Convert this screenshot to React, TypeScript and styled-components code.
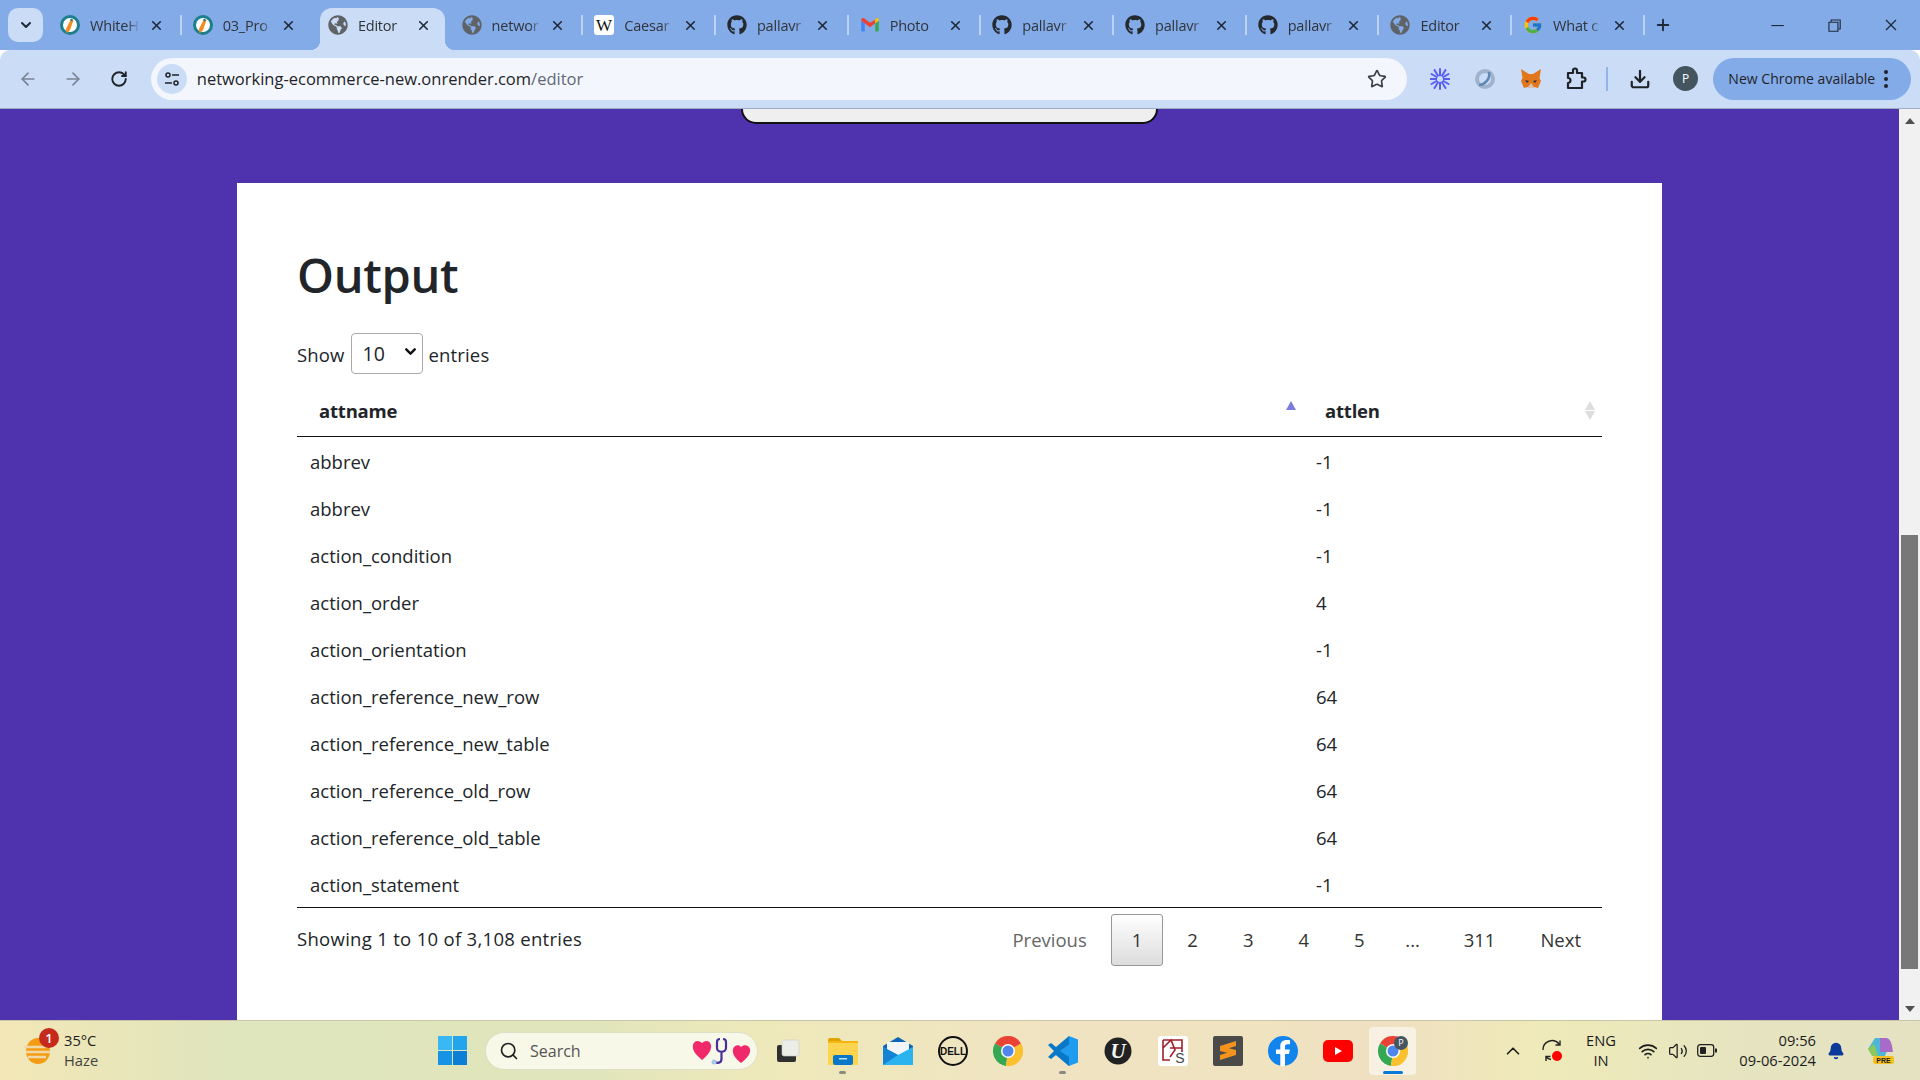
import React from 'react';
import styled, { createGlobalStyle } from 'styled-components';
import { FaGithub, FaGlobeAmericas } from 'react-icons/fa';
import { FcGoogle } from 'react-icons/fc';
import { VscClose, VscChromeMinimize, VscChromeRestore } from 'react-icons/vsc';
import { ArrowLeft, ArrowRight, RotateCw, Star, Download, ChevronDown, Plus, Search, ChevronUp, Wifi, Volume2, Bell, X } from 'lucide-react';

const UI_FONT = `"Open Sans", "Noto Sans", sans-serif`;

const GlobalStyle = createGlobalStyle`
  html, body { margin: 0; padding: 0; height: 100%; overflow: hidden; }
  body { font-family: ${UI_FONT}; color: #212529; }
  * { box-sizing: border-box; }
`;

const Screen = styled.div`
  width: 1920px;
  height: 1080px;
  display: flex;
  flex-direction: column;
  overflow: hidden;
`;

/* browser chrome */
const TabStrip = styled.div`
  height: 50px;
  flex: none;
  background: #83abe8;
  display: flex;
  padding-left: 8px;
`;
const TabMenu = styled.div`
  width: 35px;
  height: 34px;
  margin-top: 8px;
  margin-right: 5px;
  flex: none;
  border-radius: 10px;
  background: #cbdcf6;
  display: flex;
  align-items: center;
  justify-content: center;
  color: #1f2937;
`;
const Tab = styled.div<{ $active?: boolean; $sep?: boolean }>`
  position: relative;
  z-index: 1;
  width: 124.7px;
  flex: none;
  height: 42px;
  margin: 8px ${(p) => (p.$active ? '5px' : '4px')} 0 ${(p) => (p.$active ? '6.5px' : '4px')};
  padding: 0 0 8px 8px;
  display: flex;
  align-items: center;
  border-radius: 12px 12px 0 0;
  background: ${(p) => (p.$active ? '#cbdcf6' : 'transparent')};
  ${(p) =>
    p.$active
      ? `&::before, &::after {
           content: '';
           position: absolute;
           bottom: 0;
           width: 10px;
           height: 10px;
         }
         &::before {
           left: -10px;
           background: radial-gradient(circle at 0 0, transparent 10px, #cbdcf6 10.5px);
         }
         &::after {
           right: -10px;
           background: radial-gradient(circle at 100% 0, transparent 10px, #cbdcf6 10.5px);
         }`
      : p.$sep
      ? `&::after {
           content: '';
           position: absolute;
           right: -5px;
           top: 7px;
           width: 2px;
           height: 20px;
           background: #bcd2f3;
         }`
      : ''}
`;
const TabIcon = styled.div`
  width: 20px;
  height: 20px;
  flex: none;
  display: flex;
  align-items: center;
  justify-content: center;
  font-size: 20px;
`;
const TabTitle = styled.div`
  width: 52px;
  margin-left: 10px;
  font-size: 14.5px;
  letter-spacing: -0.2px;
  color: #30343a;
  white-space: nowrap;
  overflow: hidden;
  -webkit-mask-image: linear-gradient(90deg, #000 72%, transparent 96%);
  mask-image: linear-gradient(90deg, #000 72%, transparent 96%);
`;
const TabClose = styled.div`
  margin-left: 6px;
  width: 16px;
  height: 16px;
  display: flex;
  align-items: center;
  justify-content: center;
  color: #1f2937;
`;
const NewTab = styled.div`
  margin: 8px 0 0 4px;
  width: 30px;
  height: 34px;
  display: flex;
  align-items: center;
  justify-content: center;
  color: #1f2937;
`;
const WindowControls = styled.div`
  margin-left: auto;
  display: flex;
  height: 50px;
  padding-right: 1px;
`;
const WindowButton = styled.div`
  width: 57px;
  display: flex;
  align-items: center;
  justify-content: center;
  color: #1f2937;
`;
const Toolbar = styled.div`
  height: 59px;
  flex: none;
  background: #cbdcf6;
  border-radius: 10px 10px 0 0;
  border-bottom: 1px solid #9fadc4;
  display: flex;
  align-items: center;
  padding: 0 8px 1px 5px;
`;
const ToolButton = styled.div<{ $dim?: boolean }>`
  width: 45.6px;
  height: 40px;
  flex: none;
  display: flex;
  align-items: center;
  justify-content: center;
  color: ${(p) => (p.$dim ? '#7a8494' : '#1f2328')};
`;
const Omnibox = styled.div`
  width: 1256px;
  height: 42px;
  flex: none;
  margin: 0 10px 0 9px;
  border-radius: 21px;
  background: #f3f7fd;
  display: flex;
  align-items: center;
  padding: 0 20px 0 6px;
`;
const SiteChip = styled.div`
  width: 30px;
  height: 30px;
  border-radius: 50%;
  background: #cbdcf6;
  display: flex;
  align-items: center;
  justify-content: center;
`;
const Url = styled.div`
  margin-left: 10px;
  font-size: 16.5px;
  color: #1f2328;
  span { color: #5f6772; }
`;
const StarSlot = styled.div`
  margin-left: auto;
  display: flex;
  color: #3c4043;
`;
const ToolDivider = styled.div`
  width: 2px;
  height: 24px;
  background: #92b4e8;
  margin: 0 9px 0 7px;
  flex: none;
`;
const Avatar = styled.div`
  width: 25px;
  height: 25px;
  border-radius: 50%;
  background: #44555f;
  color: #fff;
  font-size: 12px;
  display: flex;
  align-items: center;
  justify-content: center;
`;
const UpdatePill = styled.div`
  margin-left: 5px;
  width: 198px;
  height: 42px;
  flex: none;
  border-radius: 21px;
  background: #83abe8;
  display: flex;
  align-items: center;
  padding-left: 15px;
  font-size: 14px;
  letter-spacing: 0.03px;
  color: #1f2328;
  white-space: nowrap;
  svg { margin-left: 9px; }
`;

/* page */
const Viewport = styled.div`
  height: 911px;
  flex: none;
  display: flex;
`;
const Page = styled.div`
  width: 1899px;
  flex: none;
  background: #4f32ae;
  overflow: hidden;
`;
const TopPill = styled.div`
  width: 417px;
  height: 15px;
  margin: 0 auto;
  background: #efefef;
  border: 2px solid #111;
  border-top: 0;
  border-radius: 0 0 22px 22px;
`;
const Card = styled.div`
  width: 1425px;
  height: 900px;
  margin: 59px auto 0;
  background: #fff;
  padding: 63px 60px 0;
`;
const Heading = styled.h1`
  margin: 0 0 29px;
  font-size: 47px;
  font-weight: 600;
  line-height: 58px;
  letter-spacing: -0.3px;
  color: #212529;
`;
const LengthRow = styled.div`
  height: 41px;
  padding-top: 2px;
  display: flex;
  align-items: center;
  gap: 6px;
  font-size: 18.5px;
  letter-spacing: 0.15px;
`;
const SelectWrap = styled.div`
  position: relative;
  width: 72px;
  height: 41px;
  margin-top: -2px;
  svg {
    position: absolute;
    right: 4px;
    top: 10px;
    pointer-events: none;
  }
`;
const LengthSelect = styled.select`
  appearance: none;
  width: 72px;
  height: 41px;
  padding: 0 0 0 11px;
  border: 1px solid #aaa;
  border-radius: 4px;
  background: #fff;
  font-family: ${UI_FONT};
  font-size: 19.5px;
  color: #212529;
`;
const Table = styled.table`
  width: 1305px;
  margin-top: 15px;
  border-collapse: collapse;
  table-layout: fixed;
  font-size: 18.5px;
  border-bottom: 1px solid #111;
`;
const HeadCell = styled.th<{ $w: number }>`
  position: relative;
  width: ${(p) => p.$w}px;
  height: 47px;
  padding: 0 0 3px 22px;
  text-align: left;
  font-weight: 700;
  letter-spacing: -0.2px;
  border-bottom: 1px solid #111;
`;
const SortArrow = styled.span<{ $dir: 'up' | 'down'; $on?: boolean }>`
  position: absolute;
  right: 7px;
  top: ${(p) => (p.$dir === 'up' ? '12px' : '22px')};
  width: 0;
  height: 0;
  border-left: 5px solid transparent;
  border-right: 5px solid transparent;
  ${(p) =>
    p.$dir === 'up'
      ? `border-bottom: 9px solid ${p.$on ? '#7c7cdc' : '#dddddd'};`
      : `border-top: 9px solid ${p.$on ? '#7c7cdc' : '#dddddd'};`}
`;
const Row = styled.tr`
  &:first-child td { height: 48px; }
`;
const Cell = styled.td`
  height: 47px;
  padding: 2px 0 0 13px;
`;
const Footer = styled.div`
  height: 58px;
  display: flex;
  align-items: center;
  justify-content: space-between;
  font-size: 18.5px;
`;
const Info = styled.span`
  margin-top: 4px;
  letter-spacing: 0.3px;
`;
const Pager = styled.div`
  display: flex;
  align-items: center;
  margin-top: 6px;
  gap: 3px;
`;
const PageButton = styled.div<{ $current?: boolean; $muted?: boolean }>`
  height: 52px;
  min-width: 52px;
  padding: 0 20px;
  display: flex;
  align-items: center;
  justify-content: center;
  color: ${(p) => (p.$muted ? '#666' : '#333')};
  border: 1px solid ${(p) => (p.$current ? '#979797' : 'transparent')};
  border-radius: 3px;
  background: ${(p) => (p.$current ? 'linear-gradient(#fff, #dcdcdc)' : 'transparent')};
`;
const PageGap = styled.div`
  width: 51px;
  padding-right: 3px;
  text-align: center;
  color: #333;
`;
const Scrollbar = styled.div`
  width: 21px;
  flex: none;
  background: #f1f1f1;
  display: flex;
  flex-direction: column;
  align-items: center;
  padding-top: 9px;
`;
const ScrollArrow = styled.span<{ $up?: boolean }>`
  width: 0;
  height: 0;
  border-left: 5px solid transparent;
  border-right: 5px solid transparent;
  ${(p) => (p.$up ? 'border-bottom: 6px solid #505050;' : 'border-top: 6px solid #505050;')}
`;
const ScrollThumb = styled.div`
  width: 17px;
  height: 434px;
  margin: 411px 0 37px;
  background: #787878;
`;

/* taskbar */
const Taskbar = styled.div`
  height: 60px;
  flex: none;
  border-top: 1px solid #c9c5a6;
  background: linear-gradient(90deg, #f3e7b6 0%, #dfe5bd 12%, #e0e5bb 30%, #eee9bb 40%, #f0e3c2 55%, #efe3c0 66%, #efe0c2 72%, #efeab8 80%, #e6e5c0 90%, #e4e2c2 100%);
  display: flex;
  align-items: center;
`;
const Weather = styled.div`
  width: 425px;
  flex: none;
  padding-left: 24px;
  display: flex;
  align-items: center;
  gap: 12px;
`;
const WeatherIcon = styled.div`
  position: relative;
  width: 28px;
  height: 28px;
  display: flex;
`;
const Badge = styled.span`
  position: absolute;
  left: 15px;
  top: -9px;
  width: 20px;
  height: 20px;
  border-radius: 50%;
  background: #c42b1c;
  color: #fff;
  font-size: 13px;
  font-weight: 600;
  display: flex;
  align-items: center;
  justify-content: center;
`;
const TwoLines = styled.div<{ $align?: string; $w?: number }>`
  display: flex;
  flex-direction: column;
  align-items: ${(p) => p.$align || 'flex-start'};
  width: ${(p) => (p.$w ? `${p.$w}px` : 'auto')};
  flex: none;
  font-size: 14.7px;
  line-height: 20px;
  margin-top: -2px;
  color: #1c1c1c;
  white-space: nowrap;
`;
const Muted = styled.span`
  color: #444;
`;
const StartIcon = styled.div`
  width: 55px;
  flex: none;
  display: flex;
  justify-content: center;
`;
const SearchBox = styled.div`
  width: 273px;
  height: 38px;
  flex: none;
  margin: 0 2px 0 5px;
  border-radius: 19px;
  background: #f8f8e8;
  border: 1px solid #dedfc6;
  display: flex;
  align-items: center;
  padding: 0 5px 0 13px;
  font-size: 16px;
  color: #555;
  gap: 11px;
  svg:last-child { margin-left: auto; }
`;
const PinnedIcon = styled.div<{ $active?: boolean; $dot?: boolean }>`
  position: relative;
  width: 55px;
  height: 48px;
  flex: none;
  display: flex;
  align-items: center;
  justify-content: center;
  ${(p) =>
    p.$active
      ? `&::before {
           content: '';
           position: absolute;
           left: 4px;
           right: 4px;
           top: 0;
           bottom: 0;
           border-radius: 4px;
           background: rgba(255, 255, 255, 0.55);
         }
         &::after {
           content: '';
           position: absolute;
           bottom: 1px;
           left: 18px;
           width: 20px;
           height: 3px;
           border-radius: 2px;
           background: #0a78d6;
         }`
      : p.$dot
      ? `&::after {
           content: '';
           position: absolute;
           bottom: 1px;
           left: 24px;
           width: 7px;
           height: 3px;
           border-radius: 2px;
           background: #8a8a80;
         }`
      : ''}
  svg { position: relative; }
`;
const Tray = styled.div`
  margin-left: auto;
  display: flex;
  align-items: center;
  padding-right: 16px;
  color: #1c1c1c;
`;
const TraySlot = styled.div<{ $w: number }>`
  width: ${(p) => p.$w}px;
  flex: none;
  display: flex;
  justify-content: center;
  align-items: center;
`;

const WhiteHatIcon = () => (
  <svg width="20" height="20" viewBox="0 0 20 20">
    <circle cx="10" cy="10" r="8.5" fill="#fff" stroke="#1d7f8c" strokeWidth="3" />
    <path d="M11 4l2.500 1-3.500 10-3.500 3.500-.5-4.500z" fill="#f28a1e" />
    <circle cx="11.500" cy="5" r="1.200" fill="#1d7f8c" />
  </svg>
);

const WikiIcon = () => (
  <svg width="20" height="20" viewBox="0 0 20 20">
    <rect width="20" height="20" rx="3" fill="#fff" />
    <text x="10" y="15.500" textAnchor="middle" fontSize="17" fontFamily="Liberation Serif, serif" fill="#111">W</text>
  </svg>
);

const GmailIcon = () => (
  <svg width="18" height="14" viewBox="0 0 20 16">
    <path d="M0 3v11a1.500 1.500 0 0 0 1.500 1.500H4V6z" fill="#4285f4" />
    <path d="M16 6v9.500h2.500A1.500 1.500 0 0 0 20 14V3z" fill="#34a853" />
    <path d="M0 3l4 3 6 4.500L16 6V1.900L10 5.500 3.200.4C1.900-.6 0 .4 0 2z" fill="#ea4335" />
    <path d="M16 2v4l4-3V2c0-1.600-1.900-2.600-3.200-1.600z" fill="#fbbc04" />
  </svg>
);

const ChromeLogo = ({ badge }: { badge?: boolean }) => (
  <svg width="30" height="30" viewBox="0 0 30 30">
    <path d="M2 7.500A15 15 0 0 1 28 7.500L15 15Z" fill="#ea4335" />
    <path d="M2 7.500A15 15 0 0 0 13 29.900L15 15Z" fill="#34a853" />
    <path d="M28 7.500A15 15 0 0 1 13 29.900L15 15Z" fill="#fbc02d" />
    <circle cx="15" cy="15" r="7" fill="#fff" />
    <circle cx="15" cy="15" r="5.500" fill="#4f86ec" />
    {badge && (
      <g>
        <circle cx="23" cy="7" r="7" fill="#44555f" />
        <text x="23" y="10" textAnchor="middle" fontSize="9" fontFamily="Open Sans, sans-serif" fill="#fff">P</text>
      </g>
    )}
  </svg>
);

const tabs = [
  { title: 'WhiteH', icon: <WhiteHatIcon />, sep: true },
  { title: '03_Pro', icon: <WhiteHatIcon /> },
  { title: 'Editor', icon: <FaGlobeAmericas color="#5f6368" />, active: true },
  { title: 'networ', icon: <FaGlobeAmericas color="#5f6368" />, sep: true },
  { title: 'Caesar', icon: <WikiIcon />, sep: true },
  { title: 'pallavr', icon: <FaGithub color="#24292f" />, sep: true },
  { title: 'Photo', icon: <GmailIcon />, sep: true },
  { title: 'pallavr', icon: <FaGithub color="#24292f" />, sep: true },
  { title: 'pallavr', icon: <FaGithub color="#24292f" />, sep: true },
  { title: 'pallavr', icon: <FaGithub color="#24292f" />, sep: true },
  { title: 'Editor', icon: <FaGlobeAmericas color="#5f6368" />, sep: true },
  { title: 'What c', icon: <FcGoogle />, sep: true },
];

const rows: [string, string][] = [
  ['abbrev', '-1'],
  ['abbrev', '-1'],
  ['action_condition', '-1'],
  ['action_order', '4'],
  ['action_orientation', '-1'],
  ['action_reference_new_row', '64'],
  ['action_reference_new_table', '64'],
  ['action_reference_old_row', '64'],
  ['action_reference_old_table', '64'],
  ['action_statement', '-1'],
];

const pinned = [
  {
    key: 'files',
    icon: (
      <svg width="24" height="24" viewBox="0 0 24 24">
        <rect x="1" y="6" width="19" height="17" rx="2" fill="#2f2f2f" />
        <rect x="6" y="1" width="17" height="16" rx="2" fill="#ecece8" stroke="#cfcfc8" strokeWidth="0.6" />
      </svg>
    ),
  },
  {
    key: 'folder',
    dot: true,
    icon: (
      <svg width="30" height="28" viewBox="0 0 30 28">
        <path d="M0 3a2 2 0 0 1 2-2h9l3 3h-14z" fill="#e0a400" />
        <rect y="4" width="30" height="24" rx="1" fill="#fdd44f" />
        <rect y="4" width="30" height="2" fill="#f5b70f" />
        <rect x="5" y="18" width="20" height="10" rx="2" fill="#0a78c8" />
        <rect x="11" y="21" width="8" height="1.500" fill="#bfe2f8" />
      </svg>
    ),
  },
  {
    key: 'mail',
    icon: (
      <svg width="30" height="28" viewBox="0 0 30 28">
        <path d="M0 9L15 0l15 9v19H0z" fill="#0d66b5" />
        <path d="M4 5h22v11L15 21 4 16z" fill="#f3f6f8" />
        <path d="M0 10l15 8 15-8v18H0z" fill="#2ab3ee" />
        <path d="M0 28V10l15 8z" fill="#1583d4" />
      </svg>
    ),
  },
  {
    key: 'dell',
    icon: (
      <svg width="30" height="30" viewBox="0 0 30 30">
        <circle cx="15" cy="15" r="14" fill="none" stroke="#111" strokeWidth="2" />
        <text x="15" y="19" textAnchor="middle" fontSize="10" fontWeight="800" fontFamily="Liberation Sans, sans-serif" fill="#111">DELL</text>
      </svg>
    ),
  },
  { key: 'chrome', icon: <ChromeLogo /> },
  {
    key: 'vscode',
    dot: true,
    icon: (
      <svg width="30" height="30" viewBox="0 0 30 30">
        <path d="M21 0l9 3.500v23L21 30 7 18 21 9z" fill="#1f9cf0" />
        <path d="M21 0v9L12 15l9 6v9L8 19l-5 4-3-2 6-6-6-6 3-2 5 4z" fill="#0a78c8" />
      </svg>
    ),
  },
  {
    key: 'unreal',
    icon: (
      <svg width="28" height="28" viewBox="0 0 28 28">
        <circle cx="14" cy="14" r="13.500" fill="#222" />
        <text x="14" y="21" textAnchor="middle" fontSize="21" fontStyle="italic" fontWeight="700" fontFamily="Liberation Serif, serif" fill="#f4f4f4">U</text>
      </svg>
    ),
  },
  {
    key: 'ks',
    icon: (
      <svg width="30" height="30" viewBox="0 0 30 30">
        <rect width="30" height="30" rx="3" fill="#fff" />
        <path d="M5 4h19v12M5 4v20h7M5 12l8-8 4 10-5 7M12 12h12" fill="none" stroke="#a31f2c" strokeWidth="1.600" />
        <text x="22" y="27" textAnchor="middle" fontSize="14" fontFamily="Liberation Sans, sans-serif" fill="#444">S</text>
      </svg>
    ),
  },
  {
    key: 'sublime',
    icon: (
      <svg width="30" height="30" viewBox="0 0 30 30">
        <rect width="30" height="30" rx="2" fill="#4a4a48" />
        <path d="M23 5v5L7 15v-5zM23 14v5L7 24v-5zM7 10l16 4v5L7 15z" fill="#f6921e" />
      </svg>
    ),
  },
  {
    key: 'fb',
    icon: (
      <svg width="30" height="30" viewBox="0 0 30 30">
        <circle cx="15" cy="15" r="15" fill="#1184ee" />
        <path d="M17 30V18h4l.8-4.500H17v-3c0-1.400.8-2.300 2.400-2.300H22V4.300C21 4.100 19.700 4 18.500 4c-3.800 0-6.200 2.200-6.200 5.800v3.700H8V18h4.300v12z" fill="#fff" />
      </svg>
    ),
  },
  {
    key: 'yt',
    icon: (
      <svg width="30" height="22" viewBox="0 0 30 22">
        <rect width="30" height="22" rx="5" fill="#f00" />
        <path d="M12 7l7 4-7 4z" fill="#fff" />
      </svg>
    ),
  },
];

export default function App() {
  return (
    <Screen>
      <GlobalStyle />
      <TabStrip>
        <TabMenu>
          <ChevronDown size={16} strokeWidth={3} />
        </TabMenu>
        {tabs.map((t, i) => (
          <Tab key={i} $active={t.active} $sep={t.sep}>
            <TabIcon>{t.icon}</TabIcon>
            <TabTitle>{t.title}</TabTitle>
            <TabClose>
              <X size={15} strokeWidth={2.6} />
            </TabClose>
          </Tab>
        ))}
        <NewTab>
          <Plus size={18} strokeWidth={2.5} />
        </NewTab>
        <WindowControls>
          <WindowButton>
            <VscChromeMinimize size={18} />
          </WindowButton>
          <WindowButton>
            <VscChromeRestore size={18} />
          </WindowButton>
          <WindowButton>
            <VscClose size={20} />
          </WindowButton>
        </WindowControls>
      </TabStrip>

      <Toolbar>
        <ToolButton $dim>
          <ArrowLeft size={20} />
        </ToolButton>
        <ToolButton $dim>
          <ArrowRight size={20} />
        </ToolButton>
        <ToolButton>
          <RotateCw size={18} strokeWidth={2.5} />
        </ToolButton>
        <Omnibox>
          <SiteChip>
            <svg width="16" height="16" viewBox="0 0 16 16" fill="none" stroke="#1f2328" strokeWidth="1.500">
              <circle cx="4" cy="4" r="2" />
              <path d="M8 4h7M1 12h7" />
              <circle cx="12" cy="12" r="2" />
            </svg>
          </SiteChip>
          <Url>
            networking-ecommerce-new.onrender.com<span>/editor</span>
          </Url>
          <StarSlot>
            <Star size={20} strokeWidth={2} />
          </StarSlot>
        </Omnibox>
        <ToolButton>
          <svg width="20" height="22" viewBox="0 0 20 22" stroke="#5a5ef5" strokeWidth="2" strokeLinecap="round">
            <path d="M10 1v20M1.500 6l17 10M18.500 6l-17 10M4.500 2l11 18M15.500 2l-11 18M0.500 11h19" />
            <circle cx="10" cy="11" r="3" fill="#cbdcf6" stroke="none" />
          </svg>
        </ToolButton>
        <ToolButton>
          <svg width="22" height="24" viewBox="0 0 22 24" fill="none">
            <circle cx="11" cy="12" r="8" stroke="#9fb4cc" strokeWidth="4" />
            <path d="M5 18C10 18 17 12 15 5" stroke="#5f88b5" strokeWidth="2.500" />
          </svg>
        </ToolButton>
        <ToolButton>
          <svg width="22" height="22" viewBox="0 0 22 22">
            <path d="M1 1l8 5h4l8-5-1.500 9 1.500 3-3 7-4-1-1.500 1h-3L8 19l-4 1-3-7 1.500-3z" fill="#e2761b" />
            <path d="M8 19l3-4 3 4-1.500 1h-3z" fill="#d7c1b3" />
            <path d="M5 12l4 1-2 2zM17 12l-4 1 2 2z" fill="#233447" />
          </svg>
        </ToolButton>
        <ToolButton>
          <svg width="22" height="24" viewBox="0 0 22 24" fill="none" stroke="#1f2328" strokeWidth="2.200" strokeLinejoin="round">
            <path d="M3 6h5V3.500a2 2 0 0 1 4 0V6h5v4.500h1.500a2 2 0 0 1 0 4H17V21H3v-5a2.500 2.500 0 0 0 0-5z" />
          </svg>
        </ToolButton>
        <ToolDivider />
        <ToolButton>
          <Download size={22} strokeWidth={2.4} />
        </ToolButton>
        <ToolButton>
          <Avatar>P</Avatar>
        </ToolButton>
        <UpdatePill>
          New Chrome available
          <svg width="4" height="18" viewBox="0 0 4 18" fill="#1f2328">
            <circle cx="2" cy="2" r="2" />
            <circle cx="2" cy="9" r="2" />
            <circle cx="2" cy="16" r="2" />
          </svg>
        </UpdatePill>
      </Toolbar>

      <Viewport>
        <Page>
          <TopPill />
          <Card>
            <Heading>Output</Heading>
            <LengthRow>
              Show
              <SelectWrap>
                <LengthSelect defaultValue="10">
                  <option value="10">10</option>
                  <option value="25">25</option>
                  <option value="50">50</option>
                  <option value="100">100</option>
                </LengthSelect>
                <ChevronDown size={17} strokeWidth={3.4} color="#111" />
              </SelectWrap>
              entries
            </LengthRow>
            <Table>
              <thead>
                <tr>
                  <HeadCell $w={1006}>
                    attname
                    <SortArrow $dir="up" $on />
                  </HeadCell>
                  <HeadCell $w={299}>
                    attlen
                    <SortArrow $dir="up" />
                    <SortArrow $dir="down" />
                  </HeadCell>
                </tr>
              </thead>
              <tbody>
                {rows.map((r, i) => (
                  <Row key={i}>
                    <Cell>{r[0]}</Cell>
                    <Cell>{r[1]}</Cell>
                  </Row>
                ))}
              </tbody>
            </Table>
            <Footer>
              <Info>Showing 1 to 10 of 3,108 entries</Info>
              <Pager>
                <PageButton $muted>Previous</PageButton>
                <PageButton $current>1</PageButton>
                <PageButton>2</PageButton>
                <PageButton>3</PageButton>
                <PageButton>4</PageButton>
                <PageButton>5</PageButton>
                <PageGap>...</PageGap>
                <PageButton>311</PageButton>
                <PageButton>Next</PageButton>
              </Pager>
            </Footer>
          </Card>
        </Page>
        <Scrollbar>
          <ScrollArrow $up />
          <ScrollThumb />
          <ScrollArrow />
        </Scrollbar>
      </Viewport>

      <Taskbar>
        <Weather>
          <WeatherIcon>
            <svg width="28" height="28" viewBox="0 0 28 28">
              <ellipse cx="14" cy="14" rx="12" ry="13" fill="#f49b14" />
              <path d="M0 10h22M2 15h24M4 20h18" stroke="#f0d9a8" strokeWidth="2.500" />
            </svg>
            <Badge>1</Badge>
          </WeatherIcon>
          <TwoLines>
            <span>35°C</span>
            <Muted>Haze</Muted>
          </TwoLines>
        </Weather>
        <StartIcon>
          <svg width="29" height="29" viewBox="0 0 29 29">
            <rect width="14" height="14" fill="#3ab8f3" />
            <rect x="15" width="14" height="14" fill="#23a5ee" />
            <rect y="15" width="14" height="14" fill="#1693e4" />
            <rect x="15" y="15" width="14" height="14" fill="#0b7fd6" />
          </svg>
        </StartIcon>
        <SearchBox>
          <Search size={20} color="#222" />
          Search
          <svg width="60" height="30" viewBox="0 0 60 30">
            <path d="M10 24C3 18 0 14 1 9c1-5 6-5 9-2 3-3 8-3 9 2 1 5-3 10-9 15z" fill="#f0296a" />
            <path d="M49 27c-6-5-9-9-8-14 1-4 6-5 8-2 3-3 8-2 9 2 1 5-3 9-9 14z" fill="#f0296a" />
            <path d="M28 3c-2 0-3 1-3 3v6c0 5 9 5 9 0V6c0-2-1-3-3-3M29.500 16v7c0 5-7 5-7 1" fill="none" stroke="#4a2f9c" strokeWidth="2.200" />
            <circle cx="22" cy="26" r="2.500" fill="#a6c8e8" />
          </svg>
        </SearchBox>
        {pinned.map((p) => (
          <PinnedIcon key={p.key} $dot={p.dot}>
            {p.icon}
          </PinnedIcon>
        ))}
        <PinnedIcon $active>
          <ChromeLogo badge />
        </PinnedIcon>
        <Tray>
          <TraySlot $w={46}>
            <ChevronUp size={22} strokeWidth={1.800} />
          </TraySlot>
          <TraySlot $w={34}>
            <svg width="24" height="24" viewBox="0 0 24 24" fill="none" stroke="#222" strokeWidth="1.400">
              <path d="M2 11a9 9 0 0 1 16-6M19 1.500V6h-4.500M5 22v-4.500h4.500M5 18a9 9 0 0 0 5 2.500" />
              <circle cx="16" cy="17" r="5" fill="#f00" stroke="none" />
            </svg>
          </TraySlot>
          <TraySlot $w={62}>
            <TwoLines $align="center">
              <span>ENG</span>
              <span>IN</span>
            </TwoLines>
          </TraySlot>
          <TraySlot $w={32}>
            <Wifi size={20} />
          </TraySlot>
          <TraySlot $w={28}>
            <Volume2 size={20} strokeWidth={1.500} />
          </TraySlot>
          <TraySlot $w={30}>
            <svg width="20" height="13" viewBox="0 0 20 13" fill="none">
              <rect x="0.700" y="0.700" width="16" height="11.600" rx="2.500" stroke="#222" strokeWidth="1.300" />
              <rect x="3" y="3" width="6" height="7" rx="1" fill="#222" />
              <path d="M18 4.500h1a1 1 0 0 1 0 4h-1z" fill="#222" />
            </svg>
          </TraySlot>
          <TwoLines $align="flex-end" $w={94}>
            <span>09:56</span>
            <span>09-06-2024</span>
          </TwoLines>
          <TraySlot $w={40}>
            <Bell size={18} fill="#0b3a9a" color="#0b3a9a" />
          </TraySlot>
          <TraySlot $w={48}>
            <svg width="28" height="28" viewBox="0 0 28 28">
              <path d="M9 1h10l4 8-4 10H8L2 12z" fill="#4bb8d8" />
              <path d="M14 1h6c3 0 5 3 6 8l1 6H14z" fill="#a86cc8" />
              <path d="M2 12l6-5 4 12H6z" fill="#8cc85a" />
              <rect x="7" y="19" width="21" height="8" rx="2" fill="#f5c020" />
              <text x="17.500" y="25.500" textAnchor="middle" fontSize="7" fontWeight="700" fontFamily="Liberation Sans, sans-serif" fill="#222">PRE</text>
            </svg>
          </TraySlot>
        </Tray>
      </Taskbar>
    </Screen>
  );
}
